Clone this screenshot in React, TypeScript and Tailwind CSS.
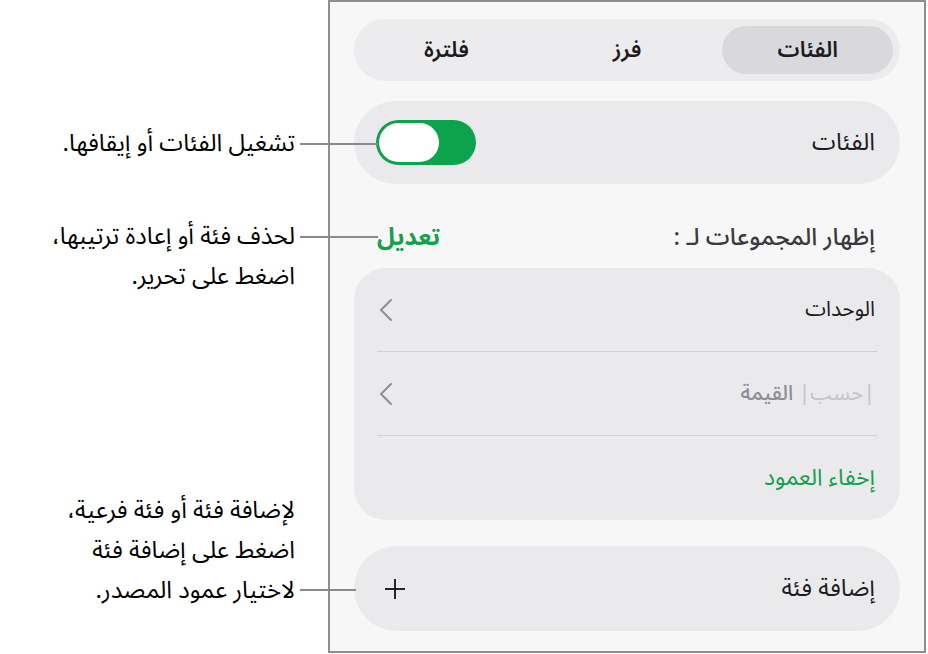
import React from 'react';

const font = { fontFamily: '"Noto Sans Arabic", "DejaVu Sans", "Noto Sans", sans-serif' };

const Chevron: React.FC = () => (
  <svg width="14" height="24" viewBox="0 0 14 24" fill="none">
    <polyline points="12,2 2,12 12,22" stroke="#8e8e93" strokeWidth="2" strokeLinecap="round" strokeLinejoin="round" />
  </svg>
);

const Plus: React.FC = () => (
  <svg width="22" height="22" viewBox="0 0 22 22" fill="none">
    <line x1="11" y1="1" x2="11" y2="21" stroke="#111" strokeWidth="1.8" />
    <line x1="1" y1="11" x2="21" y2="11" stroke="#111" strokeWidth="1.8" />
  </svg>
);

const Callout: React.FC<{ lines: string[]; className?: string }> = ({ lines, className }) => (
  <div className={`flex flex-col ${className || ''}`}>
    {lines.map((l) => (
      <div key={l} className="h-[40px] flex items-center leading-none">
        {l}
      </div>
    ))}
  </div>
);

const App: React.FC = () => {
  const tabs = ['الفئات', 'فرز', 'فلترة'];

  return (
    <div className="relative flex w-[928px] h-[654px] bg-white overflow-hidden" style={font}>
      {/* Callouts */}
      <div dir="rtl" className="w-[328px] shrink-0 pr-[33px] pt-[124px] flex flex-col text-[24px] text-black">
        <Callout lines={['تشغيل الفئات أو إيقافها.']} />
        <Callout className="mt-[53px]" lines={['لحذف فئة أو إعادة ترتيبها،', 'اضغط على تحرير.']} />
        <Callout
          className="mt-[194px]"
          lines={['لإضافة فئة أو فئة فرعية،', 'اضغط على إضافة فئة', 'لاختيار عمود المصدر.']}
        />
      </div>

      {/* Leader lines */}
      <div className="absolute left-[300px] top-[143px] w-[78px] h-[2px] bg-[#8a8a8a] z-10" />
      <div className="absolute left-[300px] top-[236px] w-[78px] h-[2px] bg-[#8a8a8a] z-10" />
      <div className="absolute left-[300px] top-[589px] w-[56px] h-[2px] bg-[#8a8a8a] z-10" />

      {/* Panel */}
      <div dir="rtl" className="w-[598px] h-[653px] shrink-0 border-2 border-[#8e8e8e] bg-[#f7f7f8] px-6 pt-[17px] flex flex-col">
        <div className="h-[62px] rounded-full bg-[#ececee] p-[7px] flex gap-[10px]">
          {tabs.map((t, i) => (
            <div
              key={t}
              className={`flex-1 rounded-full flex items-center justify-center text-[22px] font-semibold text-[#1c1c1e] ${i === 0 ? 'bg-[#d9d9dc]' : ''}`}
            >
              {t}
            </div>
          ))}
        </div>

        <div className="mt-5 h-[83px] rounded-full bg-[#eaeaec] flex items-center justify-between pr-[25px] pl-[22px]">
          <span className="text-[24px] text-[#1c1c1e]">الفئات</span>
          <div className="w-[100px] h-[45px] rounded-full bg-[#0ba34c] p-[3px] flex justify-end">
            <div className="w-[60px] h-full rounded-full bg-white" />
          </div>
        </div>

        <div className="mt-[36px] h-[36px] flex items-center justify-between pr-[25px] pl-[23px]">
          <span className="text-[24px] font-medium text-[#3a3a3c]">إظهار المجموعات لـ :</span>
          <span className="text-[24px] font-bold text-[#12a24b]">تعديل</span>
        </div>

        <div className="mt-[12px] rounded-[32px] bg-[#eaeaec] px-[23px] flex flex-col">
          <div className="h-[84px] flex items-center justify-between px-[2px] border-b border-[#d2d2d4]">
            <span className="text-[21px] text-[#1c1c1e]">الوحدات</span>
            <Chevron />
          </div>
          <div className="h-[84px] flex items-center justify-between px-[2px] border-b border-[#d2d2d4]">
            <span className="text-[21px]">
              <span className="text-[#c4c4c6]">|حسب|</span>{' '}
              <span className="text-[#8e8e93] font-medium">القيمة</span>
            </span>
            <Chevron />
          </div>
          <div className="h-[84px] flex items-center pr-[2px]">
            <span className="text-[23px] text-[#12a24b]">إخفاء العمود</span>
          </div>
        </div>

        <div className="mt-[26px] h-[85px] rounded-full bg-[#eaeaec] flex items-center justify-between pr-[25px] pl-[30px]">
          <span className="text-[24px] text-[#1c1c1e]">إضافة فئة</span>
          <Plus />
        </div>
      </div>
    </div>
  );
};

export default App;
